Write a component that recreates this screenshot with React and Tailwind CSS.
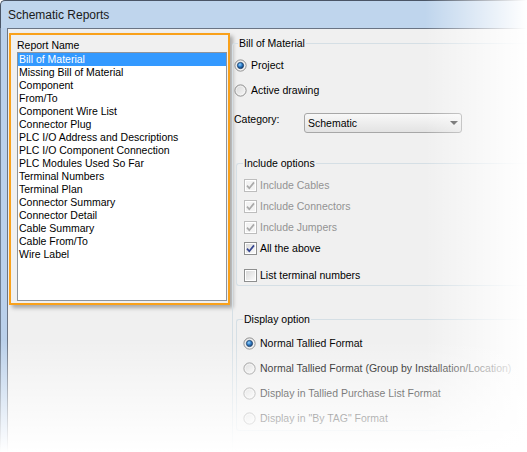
import React, { useId } from "react";

const items = [
  "Bill of Material",
  "Missing Bill of Material",
  "Component",
  "From/To",
  "Component Wire List",
  "Connector Plug",
  "PLC I/O Address and Descriptions",
  "PLC I/O Component Connection",
  "PLC Modules Used So Far",
  "Terminal Numbers",
  "Terminal Plan",
  "Connector Summary",
  "Connector Detail",
  "Cable Summary",
  "Cable From/To",
  "Wire Label",
];

function Radio({ checked }) {
  const id = useId().replace(/:/g, "");
  return (
    <svg width="13" height="13" viewBox="0 0 13 13" className="shrink-0">
      <defs>
        <linearGradient id={`${id}b`} x1="0" y1="0" x2="1" y2="1">
          <stop offset="0" stopColor="#d4d4d4" />
          <stop offset="1" stopColor="#fbfbfb" />
        </linearGradient>
        <radialGradient id={`${id}d`} cx="0.4" cy="0.35" r="0.65">
          <stop offset="0" stopColor="#9ad6ff" />
          <stop offset="0.5" stopColor="#2f80cc" />
          <stop offset="1" stopColor="#0d3a70" />
        </radialGradient>
      </defs>
      <circle cx="6.5" cy="6.5" r="5.6" fill={`url(#${id}b)`} stroke="#8a8a8a" strokeWidth="1" />
      <circle cx="6.5" cy="6.5" r="4.4" fill="none" stroke="#f6f6f6" strokeWidth="0.7" />
      {checked && (
        <circle cx="6.5" cy="6.5" r="3.1" fill={`url(#${id}d)`} stroke="#1a3f6a" strokeWidth="0.8" />
      )}
    </svg>
  );
}

function Check({ checked, disabled }) {
  const id = useId().replace(/:/g, "");
  return (
    <svg width="13" height="13" viewBox="0 0 13 13" className="shrink-0">
      <defs>
        <linearGradient id={`${id}g`} x1="0" y1="0" x2="1" y2="1">
          <stop offset="0" stopColor="#d9d9d9" />
          <stop offset="1" stopColor="#fafafa" />
        </linearGradient>
      </defs>
      <rect x="0.5" y="0.5" width="12" height="12" fill="#fff" stroke={disabled ? "#bdbdbd" : "#8e8f8f"} />
      <rect x="2" y="2" width="9" height="9" fill={disabled ? "#f3f3f3" : `url(#${id}g)`} />
      {checked && (
        <path
          d="M3 6.6 L5.3 9.2 L10 3.4"
          fill="none"
          stroke={disabled ? "#a9a9a9" : "#34458f"}
          strokeWidth="1.7"
        />
      )}
    </svg>
  );
}

function Group({ label, leftW, bodyClass, className, children }) {
  return (
    <div className={`flex flex-col ${className}`}>
      <div className="flex h-[13px]">
        <div className={`${leftW} h-[7px] self-end border-l border-t border-[#d5dfe5] rounded-tl-[3px]`} />
        <span className="leading-[13px] px-[1px] whitespace-nowrap">{label}</span>
        <div className="flex-1 h-[7px] self-end border-t border-[#d5dfe5]" />
      </div>
      <div className={`border-l border-[#d5dfe5] ${bodyClass}`}>{children}</div>
    </div>
  );
}

export default function App() {
  return (
    <div className="relative w-[527px] h-[452px] overflow-hidden bg-white font-['Liberation_Sans',Arial,sans-serif] text-[10.5px] text-black">
      {/* title bar */}
      <div className="h-[28px] border-t border-l border-[#4a5566] rounded-tl-[5px] bg-[#bfd5ed] flex items-center pl-[7px] pt-[1px]">
        <span className="text-[12px] leading-[14px] text-[#1a1a1a]">Schematic Reports</span>
      </div>
      <div className="flex h-[424px]">
        <div className="w-[7px] shrink-0 border-l border-[#6f7e92] bg-[#bad0ea]" />
        <div className="flex flex-1 border-t border-l border-[#6a7484] bg-[#f0f0f0]">
          {/* left panel */}
          <div className="w-[223px] shrink-0">
            <div className="ml-[1px] mt-[4px] w-[221px] h-[272px] border-2 border-[#f9a11b] shadow-[3px_3px_4px_rgba(0,0,0,0.3)] pl-[6px] pt-[4px]">
              <div className="leading-[13px] h-[13px]">Report Name</div>
              <div className="w-[210px] h-[249px] border border-[#8e949c] bg-white">
                {items.map((t, i) => (
                  <div
                    key={t}
                    className={
                      i === 0
                        ? "h-[13px] leading-[13px] pl-[1px] whitespace-nowrap bg-[#3399ff] text-white"
                        : "h-[13px] leading-[13px] pl-[1px] whitespace-nowrap"
                    }
                  >
                    {t}
                  </div>
                ))}
              </div>
            </div>
          </div>
          {/* right panel */}
          <div className="w-[340px] shrink-0">
            <Group label="Bill of Material" leftW="w-[6px]" className="ml-[1px] mt-[8px]" bodyClass="h-[400px]">
              <div className="h-[5px]" />
              <div className="h-[20px] flex items-center pl-[1px] gap-[4px]">
                <Radio checked />
                <span className="leading-[13px]">Project</span>
              </div>
              <div className="h-[5px]" />
              <div className="h-[20px] flex items-center pl-[1px] gap-[4px]">
                <Radio />
                <span className="leading-[13px]">Active drawing</span>
              </div>
              <div className="h-[13px]" />
              <div className="h-[20px] flex">
                <span className="w-[71px] pl-[1px] leading-[13px]">Category:</span>
                <div className="w-[158px] h-[20px] rounded-[3px] border border-[#a7a7a7] bg-linear-to-b from-[#f8f8f8] to-[#e3e3e3] flex items-center justify-between pl-[3px] pr-[3px]">
                  <span className="leading-[13px]">Schematic</span>
                  <svg width="8" height="4" viewBox="0 0 8 4">
                    <path d="M0 0H8L4 4Z" fill="#4a4a4a" />
                  </svg>
                </div>
              </div>
              <div className="h-[24px]" />
              <Group
                label="Include options"
                leftW="w-[7px]"
                className="ml-[3px]"
                bodyClass="border-b rounded-bl-[3px] pt-[5px] pb-[2px]"
              >
                {[
                  ["Include Cables", true, true],
                  ["Include Connectors", true, true],
                  ["Include Jumpers", true, true],
                  ["All the above", true, false],
                ].map(([t, c, d]) => (
                  <div key={t} className="h-[21px] flex items-center pl-[7px] gap-[3px]">
                    <Check checked={c} disabled={d} />
                    <span className={d ? "leading-[13px] text-[#939393]" : "leading-[13px]"}>{t}</span>
                  </div>
                ))}
                <div className="mt-[8px] h-[16px] flex items-center pl-[7px] gap-[3px]">
                  <Check />
                  <span className="leading-[13px]">List terminal numbers</span>
                </div>
              </Group>
              <div className="h-[27px]" />
              <Group
                label="Display option"
                leftW="w-[7px]"
                className="ml-[3px]"
                bodyClass="border-b rounded-bl-[3px] pt-[5px]"
              >
                <div className="h-[25px] flex items-center pl-[6px] gap-[4px]">
                  <Radio checked />
                  <span className="leading-[13px] whitespace-nowrap">Normal Tallied Format</span>
                </div>
                <div className="h-[25px] flex items-center pl-[6px] gap-[4px]">
                  <Radio />
                  <span className="leading-[13px] whitespace-nowrap">
                    Normal Tallied Format (Group by Installation/Location)
                  </span>
                </div>
                <div className="h-[25px] flex items-center pl-[6px] gap-[4px]">
                  <Radio />
                  <span className="leading-[13px] whitespace-nowrap">Display in Tallied Purchase List Format</span>
                </div>
                <div className="h-[24px] flex items-center pl-[6px] gap-[4px]">
                  <Radio />
                  <span className="leading-[13px] whitespace-nowrap">Display in "By TAG" Format</span>
                </div>
              </Group>
            </Group>
          </div>
        </div>
      </div>
      {/* screenshot fade-out */}
      <div className="pointer-events-none absolute top-0 right-0 h-full w-[102px] bg-linear-to-r from-white/0 to-white" />
      <div className="pointer-events-none absolute bottom-0 left-0 w-full h-[112px] bg-linear-to-b from-white/0 to-white" />
    </div>
  );
}
